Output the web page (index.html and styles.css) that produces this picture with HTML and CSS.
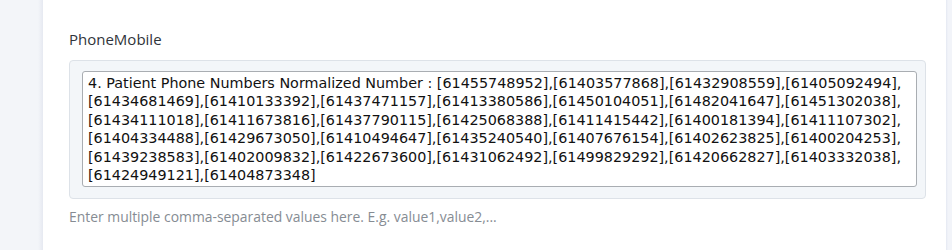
FILE: index.html
```html
<!DOCTYPE html>
<html lang="en">
<head>
    <meta charset="UTF-8">
    <meta name="viewport" content="width=device-width, initial-scale=1.0">
    <title>PhoneMobile</title>
    <link rel="stylesheet" href="styles.css">
</head>
<body>
    <div class="page">
        <div class="sidebar"></div>
        <main class="panel">
            <div class="field">
                <label class="field-label" for="phone-mobile">PhoneMobile</label>
                <div class="field-box">
                    <textarea id="phone-mobile" class="field-input" rows="6">4. Patient Phone Numbers Normalized Number : [61455748952],[61403577868],[61432908559],[61405092494],[61434681469],[61410133392],[61437471157],[61413380586],[61450104051],[61482041647],[61451302038],[61434111018],[61411673816],[61437790115],[61425068388],[61411415442],[61400181394],[61411107302],[61404334488],[61429673050],[61410494647],[61435240540],[61407676154],[61402623825],[61400204253],[61439238583],[61402009832],[61422673600],[61431062492],[61499829292],[61420662827],[61403332038],[61424949121],[61404873348]</textarea>
                </div>
                <div class="field-help">Enter multiple comma-separated values here. E.g. value1,value2,...</div>
            </div>
        </main>
        <div class="rightbar"></div>
    </div>
</body>
</html>
```

FILE: styles.css
```css
html, body {
    margin: 0;
    padding: 0;
    height: 100%;
}
body {
    font-family: "Open Sans", Lato, sans-serif;
    background-color: #f2f4f8;
    overflow: hidden;
}
.page {
    display: flex;
    height: 250px;
}
/* Side strips */
.sidebar {
    width: 43px;
    flex-shrink: 0;
    background: linear-gradient(to right, #f3f5f9 0, #f3f5f9 38px, #e6e9f1 43px);
}
.rightbar {
    width: 6px;
    flex-shrink: 0;
    background: linear-gradient(to right, #e4e8f2 0, #f2f4f9 2px);
}
/* Main panel */
.panel {
    flex: 1;
    background-color: #fff;
    padding: 30px 20px 0 26px;
}
.field-label {
    display: block;
    font-size: 15px;
    color: #2f343a;
    line-height: 18px;
    margin-bottom: 12px;
}
.field-box {
    background-color: #f3f6f9;
    border: 1px solid #dde2e8;
    border-radius: 4px;
    padding: 10px 8px 11px 12px;
}
.field-input {
    display: block;
    width: 100%;
    box-sizing: border-box;
    margin: 0;
    padding: 2px 5px;
    border: 1px solid #a9adb2;
    border-radius: 3px;
    background-color: #fff;
    font-family: "DejaVu Sans", Verdana, sans-serif;
    font-size: 14.35px;
    line-height: 18.4px;
    color: #111;
    resize: none;
    overflow: hidden;
}
.field-help {
    margin-top: 8px;
    font-size: 13.9px;
    color: #868c93;
}
```
